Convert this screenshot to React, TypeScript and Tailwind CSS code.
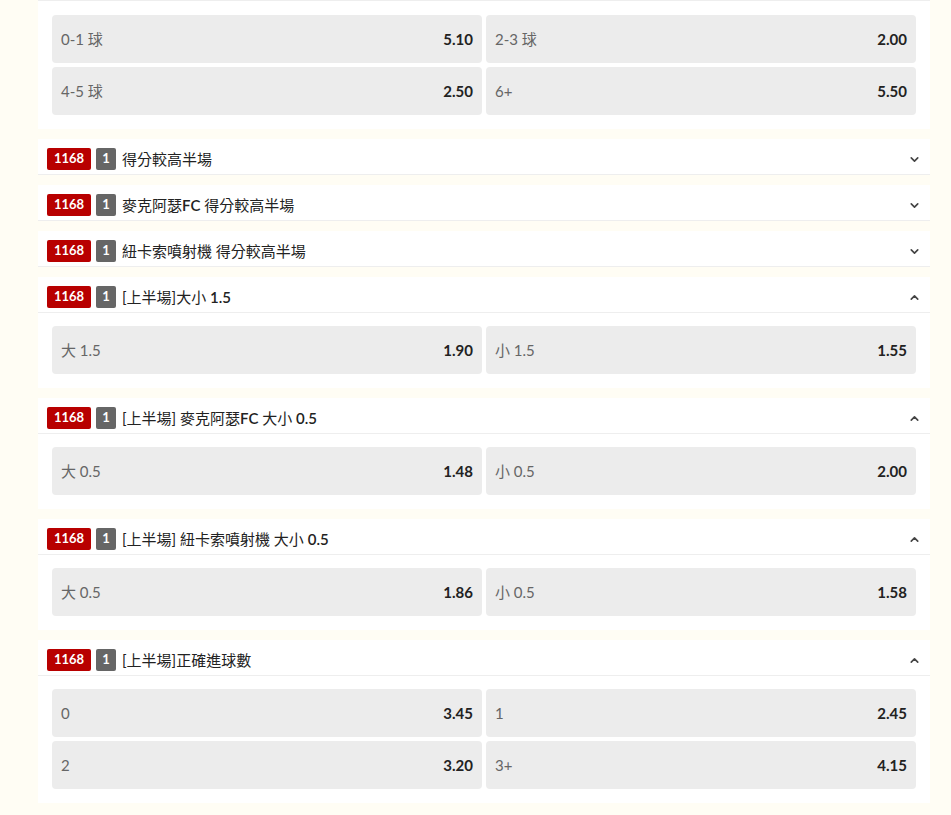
import { ChevronDown, ChevronUp } from "lucide-react";

type Odd = { label: string; price: string };
type Market = { title: string; open: boolean; odds: Odd[] };

const markets: Market[] = [
  { title: "得分較高半場", open: false, odds: [] },
  { title: "麥克阿瑟FC 得分較高半場", open: false, odds: [] },
  { title: "紐卡索噴射機 得分較高半場", open: false, odds: [] },
  {
    title: "[上半場]大小 1.5",
    open: true,
    odds: [
      { label: "大 1.5", price: "1.90" },
      { label: "小 1.5", price: "1.55" },
    ],
  },
  {
    title: "[上半場] 麥克阿瑟FC 大小 0.5",
    open: true,
    odds: [
      { label: "大 0.5", price: "1.48" },
      { label: "小 0.5", price: "2.00" },
    ],
  },
  {
    title: "[上半場] 紐卡索噴射機 大小 0.5",
    open: true,
    odds: [
      { label: "大 0.5", price: "1.86" },
      { label: "小 0.5", price: "1.58" },
    ],
  },
  {
    title: "[上半場]正確進球數",
    open: true,
    odds: [
      { label: "0", price: "3.45" },
      { label: "1", price: "2.45" },
      { label: "2", price: "3.20" },
      { label: "3+", price: "4.15" },
    ],
  },
];

const topOdds: Odd[] = [
  { label: "0-1 球", price: "5.10" },
  { label: "2-3 球", price: "2.00" },
  { label: "4-5 球", price: "2.50" },
  { label: "6+", price: "5.50" },
];

// latin runs in the title render heavier than the CJK ones
const Title = ({ text }: { text: string }) => {
  const parts = text.split(/([A-Za-z0-9.]+)/);
  return (
    <span className="whitespace-pre">
      {parts.map((p, i) =>
        /^[A-Za-z0-9.]+$/.test(p) ? (
          <span key={i} className="font-semibold">
            {p}
          </span>
        ) : (
          <span key={i}>{p}</span>
        )
      )}
    </span>
  );
};

const OddsGrid = ({ odds, top }: { odds: Odd[]; top: number }) => (
  <div
    className={`grid grid-cols-2 gap-[4px] px-[14px] pb-[14px] ${
      top === 14 ? "pt-[14px]" : "pt-[13px]"
    }`}
  >
    {odds.map((o, i) => (
      <div
        key={i}
        className="flex h-[48px] items-center justify-between rounded-[4px] bg-[#ececec] px-[9px] text-[15px]"
      >
        <span className="text-[#666]">{o.label}</span>
        <span className="font-bold text-[#222]">{o.price}</span>
      </div>
    ))}
  </div>
);

const MarketCard = ({ m }: { m: Market }) => (
  <div className="mt-[10px] bg-white">
    <div className="flex h-[36px] items-start border-b border-[#eeeeee] px-[9px] pt-[9px]">
      <span className="flex h-[22px] w-[44px] items-center justify-center rounded-[2px] bg-[#b80000] text-[13px] font-bold text-white">
        1168
      </span>
      <span className="ml-[5px] flex h-[22px] w-[20px] items-center justify-center rounded-[2px] bg-[#666] text-[13px] font-bold text-white">
        1
      </span>
      <span className="ml-[6px] flex h-[22px] items-center text-[15px] text-[#222]">
        <Title text={m.title} />
      </span>
      <span className="ml-auto flex h-[22px] items-center text-[#444]">
        {m.open ? (
          <ChevronUp size={13} strokeWidth={3} />
        ) : (
          <ChevronDown size={13} strokeWidth={3} />
        )}
      </span>
    </div>
    {m.open && <OddsGrid odds={m.odds} top={13} />}
  </div>
);

export default function App() {
  return (
    <div
      className="min-h-[815px] w-[951px] bg-[#fffdf4] pl-[38px] pr-[21px]"
      style={{ fontFamily: '"Lato", "Noto Sans CJK TC", sans-serif' }}
    >
      <div className="bg-white">
        <div className="border-t border-[#eeeeee]" />
        <OddsGrid odds={topOdds} top={14} />
      </div>
      {markets.map((m, i) => (
        <MarketCard key={i} m={m} />
      ))}
    </div>
  );
}
